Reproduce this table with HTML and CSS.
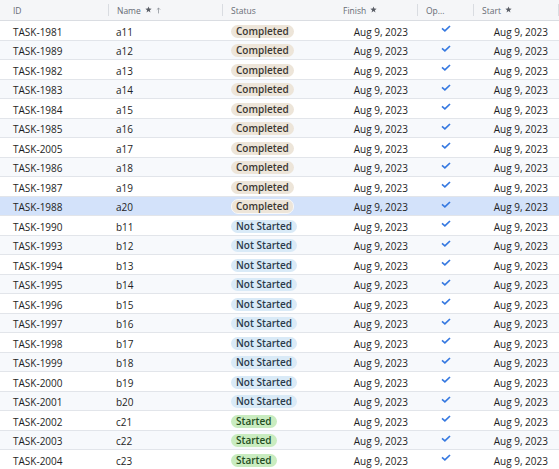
FILE: index.html
```html
<!DOCTYPE html>
<html>
<head>
<meta charset="utf-8">
<link rel="stylesheet" href="styles.css">
</head>
<body>
<div class="grid">
  <div class="row head">
    <div class="hc">ID</div>
    <div class="hc sep">Name <svg class="star" viewBox="0 0 10 10"><path d="M5 0.6 L6.2 3.7 L9.5 3.8 L6.9 5.9 L7.8 9.2 L5 7.3 L2.2 9.2 L3.1 5.9 L0.5 3.8 L3.8 3.7 Z"/></svg><svg class="arrow" viewBox="0 0 6 8"><path d="M3 7.5 V1 M1 3 L3 1 L5 3"/></svg></div>
    <div class="hc sep">Status</div>
    <div class="hc">Finish <svg class="star" viewBox="0 0 10 10"><path d="M5 0.6 L6.2 3.7 L9.5 3.8 L6.9 5.9 L7.8 9.2 L5 7.3 L2.2 9.2 L3.1 5.9 L0.5 3.8 L3.8 3.7 Z"/></svg></div>
    <div class="hc sep">Op...</div>
    <div class="hc sep">Start <svg class="star" viewBox="0 0 10 10"><path d="M5 0.6 L6.2 3.7 L9.5 3.8 L6.9 5.9 L7.8 9.2 L5 7.3 L2.2 9.2 L3.1 5.9 L0.5 3.8 L3.8 3.7 Z"/></svg></div>
    <div class="hc sep last"></div>
  </div>

  <div class="row"><div class="c id">TASK-1981</div><div class="c">a11</div><div class="c"><span class="pill done">Completed</span></div><div class="c num">Aug 9, 2023</div><div class="c chk"><svg viewBox="0 0 10 7"><path d="M1 3.4 L3.9 5.8 L9 1"/></svg></div><div class="c num">Aug 9, 2023</div></div>
  <div class="row alt"><div class="c id">TASK-1989</div><div class="c">a12</div><div class="c"><span class="pill done">Completed</span></div><div class="c num">Aug 9, 2023</div><div class="c chk"><svg viewBox="0 0 10 7"><path d="M1 3.4 L3.9 5.8 L9 1"/></svg></div><div class="c num">Aug 9, 2023</div></div>
  <div class="row"><div class="c id">TASK-1982</div><div class="c">a13</div><div class="c"><span class="pill done">Completed</span></div><div class="c num">Aug 9, 2023</div><div class="c chk"><svg viewBox="0 0 10 7"><path d="M1 3.4 L3.9 5.8 L9 1"/></svg></div><div class="c num">Aug 9, 2023</div></div>
  <div class="row alt"><div class="c id">TASK-1983</div><div class="c">a14</div><div class="c"><span class="pill done">Completed</span></div><div class="c num">Aug 9, 2023</div><div class="c chk"><svg viewBox="0 0 10 7"><path d="M1 3.4 L3.9 5.8 L9 1"/></svg></div><div class="c num">Aug 9, 2023</div></div>
  <div class="row"><div class="c id">TASK-1984</div><div class="c">a15</div><div class="c"><span class="pill done">Completed</span></div><div class="c num">Aug 9, 2023</div><div class="c chk"><svg viewBox="0 0 10 7"><path d="M1 3.4 L3.9 5.8 L9 1"/></svg></div><div class="c num">Aug 9, 2023</div></div>
  <div class="row alt"><div class="c id">TASK-1985</div><div class="c">a16</div><div class="c"><span class="pill done">Completed</span></div><div class="c num">Aug 9, 2023</div><div class="c chk"><svg viewBox="0 0 10 7"><path d="M1 3.4 L3.9 5.8 L9 1"/></svg></div><div class="c num">Aug 9, 2023</div></div>
  <div class="row"><div class="c id">TASK-2005</div><div class="c">a17</div><div class="c"><span class="pill done">Completed</span></div><div class="c num">Aug 9, 2023</div><div class="c chk"><svg viewBox="0 0 10 7"><path d="M1 3.4 L3.9 5.8 L9 1"/></svg></div><div class="c num">Aug 9, 2023</div></div>
  <div class="row alt"><div class="c id">TASK-1986</div><div class="c">a18</div><div class="c"><span class="pill done">Completed</span></div><div class="c num">Aug 9, 2023</div><div class="c chk"><svg viewBox="0 0 10 7"><path d="M1 3.4 L3.9 5.8 L9 1"/></svg></div><div class="c num">Aug 9, 2023</div></div>
  <div class="row"><div class="c id">TASK-1987</div><div class="c">a19</div><div class="c"><span class="pill done">Completed</span></div><div class="c num">Aug 9, 2023</div><div class="c chk"><svg viewBox="0 0 10 7"><path d="M1 3.4 L3.9 5.8 L9 1"/></svg></div><div class="c num">Aug 9, 2023</div></div>
  <div class="row sel"><div class="c id">TASK-1988</div><div class="c">a20</div><div class="c"><span class="pill done">Completed</span></div><div class="c num">Aug 9, 2023</div><div class="c chk"><svg viewBox="0 0 10 7"><path d="M1 3.4 L3.9 5.8 L9 1"/></svg></div><div class="c num">Aug 9, 2023</div></div>
  <div class="row"><div class="c id">TASK-1990</div><div class="c">b11</div><div class="c"><span class="pill todo">Not Started</span></div><div class="c num">Aug 9, 2023</div><div class="c chk"><svg viewBox="0 0 10 7"><path d="M1 3.4 L3.9 5.8 L9 1"/></svg></div><div class="c num">Aug 9, 2023</div></div>
  <div class="row alt"><div class="c id">TASK-1993</div><div class="c">b12</div><div class="c"><span class="pill todo">Not Started</span></div><div class="c num">Aug 9, 2023</div><div class="c chk"><svg viewBox="0 0 10 7"><path d="M1 3.4 L3.9 5.8 L9 1"/></svg></div><div class="c num">Aug 9, 2023</div></div>
  <div class="row"><div class="c id">TASK-1994</div><div class="c">b13</div><div class="c"><span class="pill todo">Not Started</span></div><div class="c num">Aug 9, 2023</div><div class="c chk"><svg viewBox="0 0 10 7"><path d="M1 3.4 L3.9 5.8 L9 1"/></svg></div><div class="c num">Aug 9, 2023</div></div>
  <div class="row alt"><div class="c id">TASK-1995</div><div class="c">b14</div><div class="c"><span class="pill todo">Not Started</span></div><div class="c num">Aug 9, 2023</div><div class="c chk"><svg viewBox="0 0 10 7"><path d="M1 3.4 L3.9 5.8 L9 1"/></svg></div><div class="c num">Aug 9, 2023</div></div>
  <div class="row"><div class="c id">TASK-1996</div><div class="c">b15</div><div class="c"><span class="pill todo">Not Started</span></div><div class="c num">Aug 9, 2023</div><div class="c chk"><svg viewBox="0 0 10 7"><path d="M1 3.4 L3.9 5.8 L9 1"/></svg></div><div class="c num">Aug 9, 2023</div></div>
  <div class="row alt"><div class="c id">TASK-1997</div><div class="c">b16</div><div class="c"><span class="pill todo">Not Started</span></div><div class="c num">Aug 9, 2023</div><div class="c chk"><svg viewBox="0 0 10 7"><path d="M1 3.4 L3.9 5.8 L9 1"/></svg></div><div class="c num">Aug 9, 2023</div></div>
  <div class="row"><div class="c id">TASK-1998</div><div class="c">b17</div><div class="c"><span class="pill todo">Not Started</span></div><div class="c num">Aug 9, 2023</div><div class="c chk"><svg viewBox="0 0 10 7"><path d="M1 3.4 L3.9 5.8 L9 1"/></svg></div><div class="c num">Aug 9, 2023</div></div>
  <div class="row alt"><div class="c id">TASK-1999</div><div class="c">b18</div><div class="c"><span class="pill todo">Not Started</span></div><div class="c num">Aug 9, 2023</div><div class="c chk"><svg viewBox="0 0 10 7"><path d="M1 3.4 L3.9 5.8 L9 1"/></svg></div><div class="c num">Aug 9, 2023</div></div>
  <div class="row"><div class="c id">TASK-2000</div><div class="c">b19</div><div class="c"><span class="pill todo">Not Started</span></div><div class="c num">Aug 9, 2023</div><div class="c chk"><svg viewBox="0 0 10 7"><path d="M1 3.4 L3.9 5.8 L9 1"/></svg></div><div class="c num">Aug 9, 2023</div></div>
  <div class="row alt"><div class="c id">TASK-2001</div><div class="c">b20</div><div class="c"><span class="pill todo">Not Started</span></div><div class="c num">Aug 9, 2023</div><div class="c chk"><svg viewBox="0 0 10 7"><path d="M1 3.4 L3.9 5.8 L9 1"/></svg></div><div class="c num">Aug 9, 2023</div></div>
  <div class="row"><div class="c id">TASK-2002</div><div class="c">c21</div><div class="c"><span class="pill go">Started</span></div><div class="c num">Aug 9, 2023</div><div class="c chk"><svg viewBox="0 0 10 7"><path d="M1 3.4 L3.9 5.8 L9 1"/></svg></div><div class="c num">Aug 9, 2023</div></div>
  <div class="row alt"><div class="c id">TASK-2003</div><div class="c">c22</div><div class="c"><span class="pill go">Started</span></div><div class="c num">Aug 9, 2023</div><div class="c chk"><svg viewBox="0 0 10 7"><path d="M1 3.4 L3.9 5.8 L9 1"/></svg></div><div class="c num">Aug 9, 2023</div></div>
  <div class="row"><div class="c id">TASK-2004</div><div class="c">c23</div><div class="c"><span class="pill go">Started</span></div><div class="c num">Aug 9, 2023</div><div class="c chk"><svg viewBox="0 0 10 7"><path d="M1 3.4 L3.9 5.8 L9 1"/></svg></div><div class="c num">Aug 9, 2023</div></div>
</div>
</body>
</html>
```

FILE: styles.css
```css
html, body {
  margin: 0;
  padding: 0;
  background: #ffffff;
  overflow: hidden;
}
.grid {
  width: 559px;
  font-family: "Open Sans", "Noto Sans", sans-serif;
  font-size: 10px;
  color: #1e1e24;
}
.row {
  display: grid;
  grid-template-columns: 108px 114px 112px 83px 56px 85px 1px;
  height: 19.5px;
  box-sizing: border-box;
  border-bottom: 1px solid #e2e5ea;
  background: #ffffff;
}
.row.alt { background: #f7f9fc; }
.row.sel { background: #d3e2fa; }
.row.head {
  height: 21px;
  background: #f5f6f8;
  border-bottom: 1px solid #dadde2;
}
.hc {
  display: flex;
  align-items: center;
  padding-left: 9px;
  padding-top: 1px;
  font-size: 8.5px;
  color: #666b74;
  position: relative;
  white-space: nowrap;
}
.hc:first-child { padding-left: 13px; }
.hc.sep::before {
  content: "";
  position: absolute;
  left: 0;
  top: 4px;
  height: 12px;
  width: 1px;
  background: #d9dce1;
}
.hc.last { padding: 0; }
.star {
  width: 7px;
  height: 7px;
  margin-left: 4px;
  margin-top: -3px;
  fill: #5a5e66;
}
.arrow {
  width: 5px;
  height: 7px;
  margin-left: 4px;
  fill: none;
  stroke: #8a8f98;
  stroke-width: 0.9;
}
.c {
  display: flex;
  align-items: center;
  padding-left: 8px;
  padding-top: 3px;
  white-space: nowrap;
}
.c.id { padding-left: 13px; }
.c:nth-child(3) { padding-left: 9px; padding-top: 2px; }
.c.num {
  justify-content: flex-end;
  padding-left: 0;
  padding-right: 9px;
}
.c.num:last-child { padding-right: 10px; }
.c.chk {
  justify-content: center;
  align-items: flex-start;
  padding-left: 0;
  padding-top: 4px;
}
.c.chk svg {
  width: 10px;
  height: 7px;
  fill: none;
  stroke: #3578e0;
  stroke-width: 1.7;
  margin-left: 1px;
}
.pill {
  display: inline-block;
  height: 13px;
  line-height: 13px;
  padding: 0 5px;
  border-radius: 7px;
  font-weight: 600;
  font-size: 10px;
  box-sizing: border-box;
}
.pill.done { background: #ede5d9; color: #3b3732; }
.pill.todo { background: #d9eaf7; color: #2b3a4a; }
.pill.go { background: #c9ecc0; color: #234d22; }
.row.sel .pill {
  border: 1px solid #f8f8f8;
  height: 15px;
  padding: 0 4px;
  line-height: 13px;
}
```
